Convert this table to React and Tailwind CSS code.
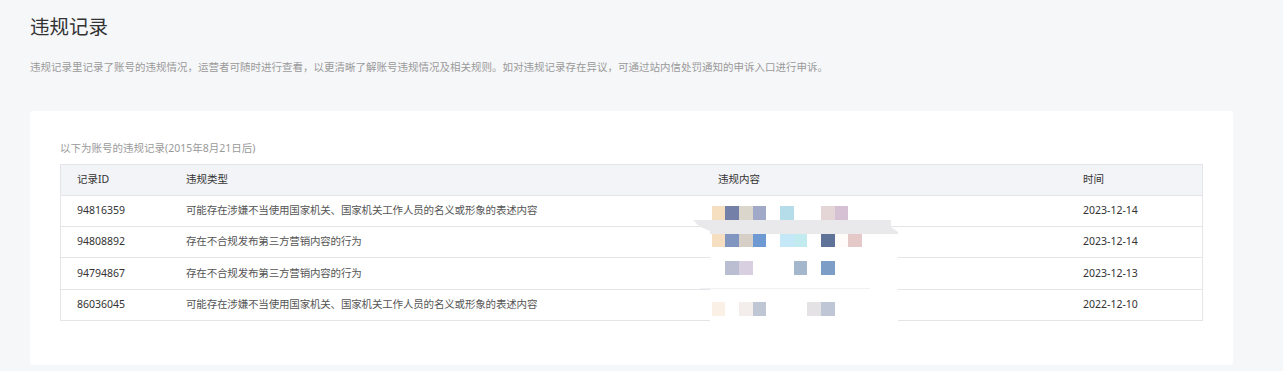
const rows = [
  { id: '94816359', type: '可能存在涉嫌不当使用国家机关、国家机关工作人员的名义或形象的表述内容', time: '2023-12-14', h: 'h-[31px]' },
  { id: '94808892', type: '存在不合规发布第三方营销内容的行为', time: '2023-12-14', h: 'h-[31px]' },
  { id: '94794867', type: '存在不合规发布第三方营销内容的行为', time: '2023-12-13', h: 'h-[32px]' },
  { id: '86036045', type: '可能存在涉嫌不当使用国家机关、国家机关工作人员的名义或形象的表述内容', time: '2022-12-10', h: 'h-[30px]' },
]

// pixelated blur over the 违规内容 column: [x, y, w, h, color]
const tiles = [
  [32, 16, 13, 14, '#f5dfc0'], [45, 16, 14, 14, '#7480a8'], [59, 16, 14, 14, '#dbd6cc'], [73, 16, 13, 14, '#a0aac8'],
  [100, 16, 14, 14, '#b5dde9'], [141, 16, 14, 14, '#e4d5d6'], [155, 16, 13, 14, '#d6c0d4'],
  [32, 44, 13, 13, '#f5dfc0'], [45, 44, 14, 13, '#8095c0'], [59, 44, 14, 13, '#d6cfc8'], [73, 44, 13, 13, '#6e99d2'],
  [100, 44, 14, 13, '#c4e8f8'], [114, 44, 13, 13, '#c2ebf0'], [141, 44, 14, 13, '#5f7399'], [155, 44, 13, 13, '#fffbf8'],
  [168, 44, 14, 13, '#e5c8c8'],
  [45, 71, 14, 14, '#bbbdd0'], [59, 71, 14, 14, '#d8d0e0'], [114, 71, 13, 14, '#a5b7cc'], [141, 71, 14, 14, '#7b9dc6'],
  [32, 112, 13, 14, '#faf0e6'], [59, 112, 14, 14, '#f3edec'], [73, 112, 13, 14, '#bfc7d5'], [127, 112, 14, 14, '#e4e2e4'],
  [141, 112, 14, 14, '#bfc6d5'],
]

function Mosaic() {
  return (
    <svg className="absolute left-[619px] top-[25px]" width="240" height="135" viewBox="0 0 240 135">
      <rect x="30" y="58" width="188" height="74" fill="#fff" />
      <line x1="20" y1="98.5" x2="190" y2="98.5" stroke="#f1f1f3" />
      <polygon points="13,30 211,30 211,37 218,42 218,44 30,44 30,41 20,37" fill="#e9e9eb" />
      {tiles.map(([x, y, w, h, c], i) => (
        <rect key={i} x={x} y={y} width={w} height={h} fill={c} />
      ))}
    </svg>
  )
}

export default function App() {
  return (
    <div
      className="min-h-[371px] bg-[#f6f7f9] pl-[30px] pr-[50px] pt-[13px] pb-[6px]"
      style={{ fontFamily: '"Noto Sans", "Noto Sans CJK SC", sans-serif' }}
    >
      <h1 className="text-[19.5px] leading-[28px] text-[#333] font-normal">违规记录</h1>
      <p className="mt-[16px] text-[10.5px] leading-[20px] text-[#9a9a9a]">
        违规记录里记录了账号的违规情况，运营者可随时进行查看，以更清晰了解账号违规情况及相关规则。如对违规记录存在异议，可通过站内信处罚通知的申诉入口进行申诉。
      </p>

      <div className="mt-[34px] bg-white rounded-[3px] px-[30px] pt-[27px] pb-[44px]">
        <div className="text-[10.5px] leading-[20px] text-[#9a9a9a]">以下为账号的违规记录(2015年8月21日后)</div>

        <div className="relative mt-[6px] border border-[#e4e5e9] text-[10.5px]">
          <div className="grid grid-cols-[109px_532px_365px_1fr] h-[31px] items-center bg-[#f3f4f7] border-b border-[#e4e5e9] text-[#333]">
            <div className="pl-4">记录ID</div>
            <div className="pl-4">违规类型</div>
            <div className="pl-4">违规内容</div>
            <div className="pl-4">时间</div>
          </div>
          {rows.map((r, i) => (
            <div
              key={r.id}
              className={
                'grid grid-cols-[109px_532px_365px_1fr] items-center ' +
                r.h +
                (i < rows.length - 1 ? ' border-b border-[#e4e5e9]' : '')
              }
            >
              <div className="pl-4 text-[#333]">{r.id}</div>
              <div className="pl-4 tracking-[-0.17px] text-[#555]">{r.type}</div>
              <div className="pl-4"></div>
              <div className="pl-4 text-[#333]">{r.time}</div>
            </div>
          ))}
          <Mosaic />
        </div>
      </div>
    </div>
  )
}
